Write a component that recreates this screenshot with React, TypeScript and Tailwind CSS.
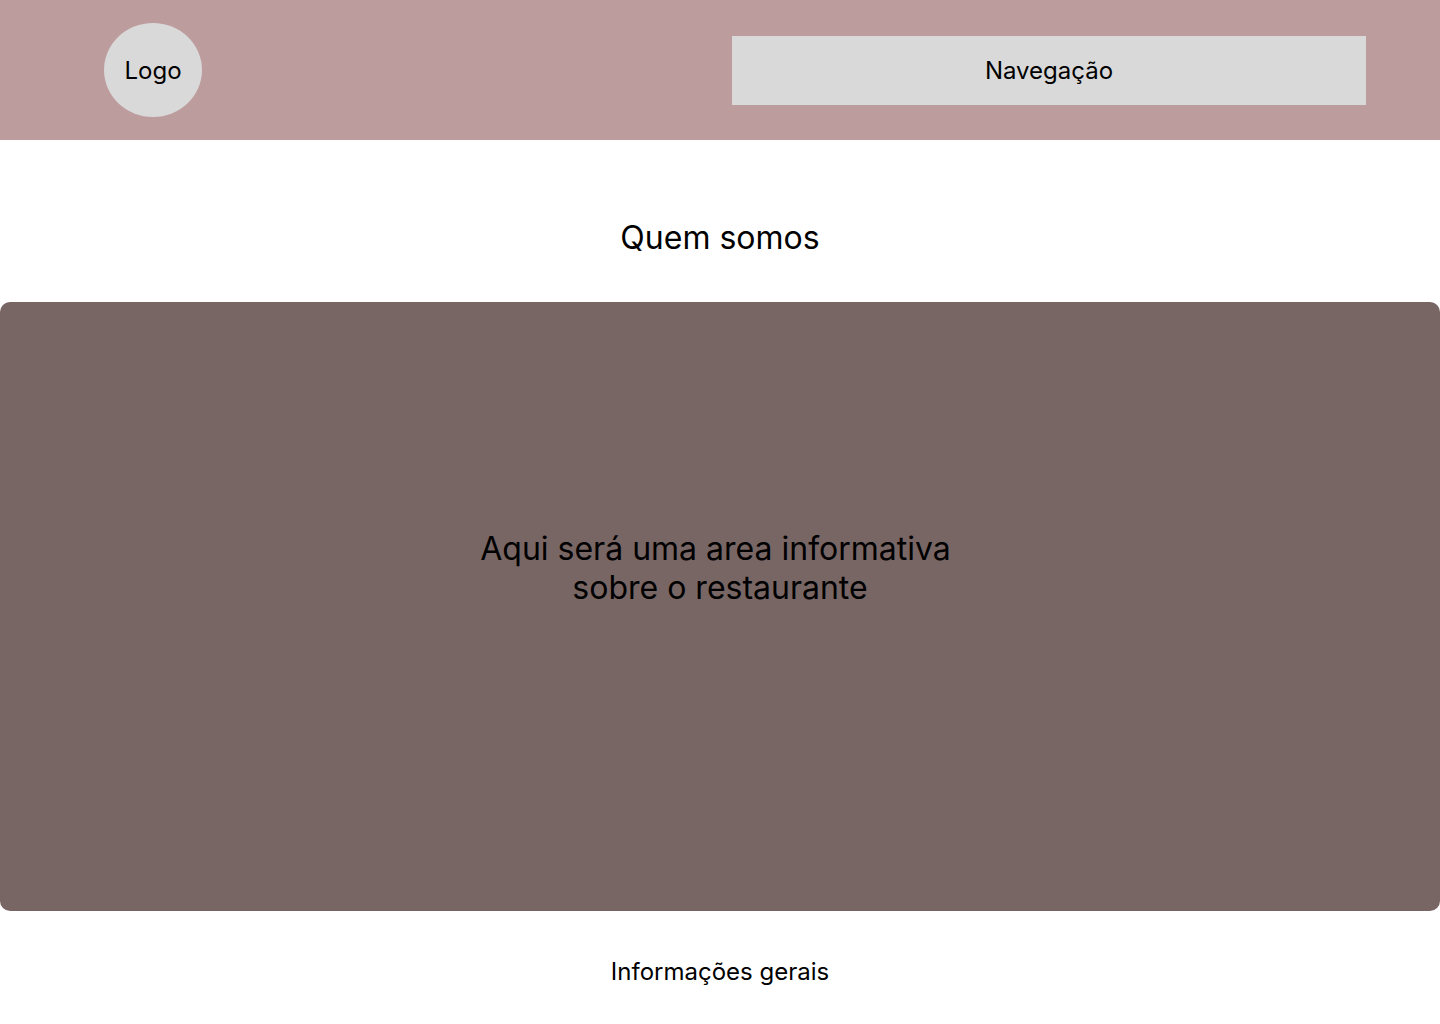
export default function App() {
  return (
    <div className="min-h-[1024px] bg-white text-black" style={{ fontFamily: "Inter, 'Noto Sans', sans-serif" }}>
      <header className="flex h-[140px] items-center justify-between bg-[#bd9c9e] pl-[104px] pr-[74px]">
        <div className="flex h-[94px] w-[98px] items-center justify-center rounded-[50%] bg-[#d9d9d9] pt-[2px] text-[24px]">
          Logo
        </div>
        <nav className="flex h-[69px] w-[634px] items-center justify-center bg-[#d9d9d9] pt-[2px] text-[24px]">
          Navegação
        </nav>
      </header>
      <div className="flex h-[162px] items-center justify-center pt-[34px]">
        <h1 className="text-[32px] font-normal">Quem somos</h1>
      </div>
      <section className="flex h-[609px] items-center justify-center rounded-[10px] bg-[#786665] pb-[77px] text-center text-[32px] leading-[39px]">
        <p>
          Aqui será uma area informativa{"\u00a0"}
          <br />
          sobre o restaurante
        </p>
      </section>
      <footer className="flex h-[120px] items-center justify-center pt-[2px] text-[24px]">
        Informações gerais
      </footer>
    </div>
  );
}
